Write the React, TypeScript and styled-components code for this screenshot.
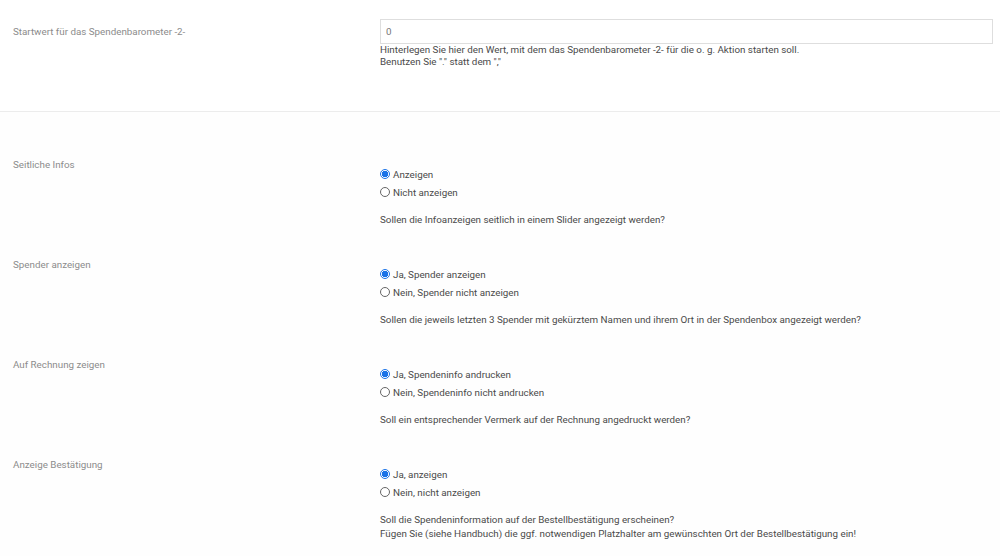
import React from "react";
import styled, { createGlobalStyle } from "styled-components";

const GlobalStyle = createGlobalStyle`
  html, body {
    margin: 0;
    padding: 0;
    background: #ffffff;
  }
  body {
    font-family: Roboto, "Liberation Sans", Arial, sans-serif;
    font-size: 9.8px;
    color: #444;
  }
`;

const Page = styled.div`
  width: 1000px;
  height: 558px;
  overflow: hidden;
  background: #ffffff;
`;

const TopSection = styled.section`
  display: grid;
  grid-template-columns: 367px 1fr;
  padding: 19px 7px 0 13px;
  height: 112px;
  box-sizing: border-box;
  border-bottom: 1px solid #ececec;
`;

const Sections = styled.div`
  padding-top: 44px;
  background: #fefefe;
`;

const Section = styled.section`
  display: grid;
  grid-template-columns: 367px 1fr;
  padding: 0 7px 0 13px;
  height: 100px;
  box-sizing: border-box;
`;

const Label = styled.div<{ $lh?: number; $pt?: number }>`
  color: #8c8c8c;
  font-size: 9.8px;
  padding-top: ${(p) => p.$pt ?? 0}px;
  line-height: ${(p) => p.$lh ?? 14}px;
`;

const Field = styled.div`
  display: flex;
  flex-direction: column;
`;

const TextInput = styled.input`
  box-sizing: border-box;
  width: 100%;
  height: 25px;
  margin: 0;
  padding: 0 5px;
  border: 1px solid #dedede;
  border-radius: 0;
  font-family: Roboto, "Liberation Sans", Arial, sans-serif;
  font-size: 9.8px;
  color: #777;
  background: #fff;
  outline: none;
`;

const Help = styled.div<{ $mt?: number; $lh?: number }>`
  margin-top: ${(p) => p.$mt ?? 0}px;
  color: #4a4a4a;
  font-size: 9.8px;
  line-height: ${(p) => p.$lh ?? 12}px;
`;

const RadioGroup = styled.div`
  margin-top: 9px;
  display: flex;
  flex-direction: column;
`;

const RadioRow = styled.label`
  display: flex;
  align-items: center;
  gap: 3px;
  height: 18px;
  color: #4a4a4a;
  font-size: 9.8px;
`;

const RadioCircle = styled.span<{ $checked?: boolean }>`
  box-sizing: border-box;
  width: 10px;
  height: 10px;
  border-radius: 50%;
  flex: none;
  border: 1px solid ${(p) => (p.$checked ? "#1a73e8" : "#666")};
  background: ${(p) =>
    p.$checked
      ? "radial-gradient(circle, #1a73e8 0 3px, #ffffff 3.5px)"
      : "#fff"};
`;

type Opt = { text: string; checked?: boolean };

const Radio: React.FC<Opt> = ({ text, checked }) => (
  <RadioRow>
    <RadioCircle $checked={checked} />
    <span>{text}</span>
  </RadioRow>
);

const sections: { label: string; options: Opt[]; help: string[] }[] = [
  {
    label: "Seitliche Infos",
    options: [{ text: "Anzeigen", checked: true }, { text: "Nicht anzeigen" }],
    help: ["Sollen die Infoanzeigen seitlich in einem Slider angezeigt werden?"],
  },
  {
    label: "Spender anzeigen",
    options: [
      { text: "Ja, Spender anzeigen", checked: true },
      { text: "Nein, Spender nicht anzeigen" },
    ],
    help: [
      "Sollen die jeweils letzten 3 Spender mit gekürztem Namen und ihrem Ort in der Spendenbox angezeigt werden?",
    ],
  },
  {
    label: "Auf Rechnung zeigen",
    options: [
      { text: "Ja, Spendeninfo andrucken", checked: true },
      { text: "Nein, Spendeninfo nicht andrucken" },
    ],
    help: ["Soll ein entsprechender Vermerk auf der Rechnung angedruckt werden?"],
  },
  {
    label: "Anzeige Bestätigung",
    options: [
      { text: "Ja, anzeigen", checked: true },
      { text: "Nein, nicht anzeigen" },
    ],
    help: [
      "Soll die Spendeninformation auf der Bestellbestätigung erscheinen?",
      "Fügen Sie (siehe Handbuch) die ggf. notwendigen Platzhalter am gewünschten Ort der Bestellbestätigung ein!",
    ],
  },
];

export default function App() {
  return (
    <Page>
      <GlobalStyle />
      <TopSection>
        <Label $lh={25}>Startwert für das Spendenbarometer -2-</Label>
        <Field>
          <TextInput defaultValue="0" />
          <Help>
            Hinterlegen Sie hier den Wert, mit dem das Spendenbarometer -2- für
            die o. g. Aktion starten soll.
          </Help>
          <Help>Benutzen Sie "." statt dem ","</Help>
        </Field>
      </TopSection>
      <Sections>
        {sections.map((s) => (
          <Section key={s.label}>
            <Label $pt={2}>{s.label}</Label>
            <Field>
              <RadioGroup>
                {s.options.map((o) => (
                  <Radio key={o.text} {...o} />
                ))}
              </RadioGroup>
              <Help $mt={12} $lh={14}>
                {s.help.map((h) => (
                  <div key={h}>{h}</div>
                ))}
              </Help>
            </Field>
          </Section>
        ))}
      </Sections>
    </Page>
  );
}
